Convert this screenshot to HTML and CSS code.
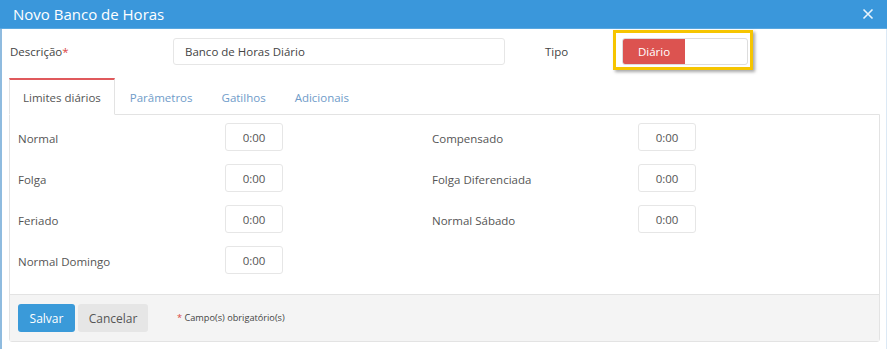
FILE: index.html
```html
<!DOCTYPE html>
<html lang="pt-BR">
<head>
<meta charset="utf-8">
<title>Novo Banco de Horas</title>
<link rel="stylesheet" href="styles.css">
</head>
<body>
<div class="modal">
  <div class="modal-header">
    <span class="modal-title">Novo Banco de Horas</span>
    <svg class="close" width="12" height="12" viewBox="0 0 12 12"><path d="M1.5 1.5L10.5 10.5M10.5 1.5L1.5 10.5" stroke="#eaf4fc" stroke-width="1.6" fill="none"/></svg>
  </div>
  <div class="modal-body">
    <div class="top-row">
      <label class="lbl-desc">Descrição<span class="req">*</span></label>
      <div class="input desc-input">Banco de Horas Diário</div>
      <label class="lbl-tipo">Tipo</label>
      <div class="toggle-wrap">
        <div class="toggle"><span class="toggle-on">Diário</span></div>
        <span class="highlight"></span>
      </div>
    </div>
    <div class="tabs">
      <div class="tab active">Limites diários</div>
      <div class="tab">Parâmetros</div>
      <div class="tab">Gatilhos</div>
      <div class="tab">Adicionais</div>
    </div>
    <div class="panel">
      <div class="grid">
        <span class="lbl">Normal</span><div class="time">0:00</div><span></span>
        <span class="lbl">Compensado</span><div class="time">0:00</div>
        <span class="lbl">Folga</span><div class="time">0:00</div><span></span>
        <span class="lbl">Folga Diferenciada</span><div class="time">0:00</div>
        <span class="lbl">Feriado</span><div class="time">0:00</div><span></span>
        <span class="lbl">Normal Sábado</span><div class="time">0:00</div>
        <span class="lbl">Normal Domingo</span><div class="time">0:00</div><span></span>
        <span></span><span></span>
      </div>
      <div class="footer">
        <button class="btn btn-primary">Salvar</button>
        <button class="btn btn-default">Cancelar</button>
        <span class="note"><span class="req">*</span> Campo(s) obrigatório(s)</span>
      </div>
    </div>
  </div>
</div>
</body>
</html>
```
FILE: styles.css
```css
* { box-sizing: border-box; }
html, body { margin: 0; padding: 0; background: #fff; }
body { font-family: "Open Sans", "Noto Sans", sans-serif; color: #555; width: 887px; height: 349px; overflow: hidden; }

.modal {
  height: 349px;
  border-left: 2px solid #8fbbdf;
  border-right: 1px solid #dce9f5;
}
.modal-header {
  height: 29px;
  margin-left: -2px;
  margin-right: -1px;
  background: #3a97db;
  border-bottom: 1px solid #5aa8e0;
  display: flex;
  align-items: center;
  justify-content: space-between;
  padding: 0 13px 0 13px;
}
.modal-title { color: #fff; font-size: 15px; line-height: 20px; }
.close { display: block; }

.modal-body { padding: 8px 5px 0 7px; }

.top-row { display: flex; align-items: center; height: 27px; margin-top: 1px; }
.lbl-desc { font-size: 11.5px; color: #444; width: 164px; padding-left: 1px; }
.req { color: #d9453f; }
.input {
  height: 27px;
  border: 1px solid #e6e6e6;
  border-radius: 3px;
  font-size: 11.5px;
  color: #444;
  display: flex;
  align-items: center;
}
.desc-input { width: 332px; padding-left: 11px; }
.lbl-tipo { font-size: 11.5px; color: #444; margin-left: 40px; width: 77px; }

.toggle-wrap { position: relative; }
.toggle {
  width: 126px;
  height: 27px;
  border: 1px solid #ddd;
  border-radius: 3px;
  background: #fff;
  display: flex;
}
.toggle-on {
  width: 62px;
  background: #dc5350;
  color: #fff;
  font-size: 11.5px;
  display: flex;
  align-items: center;
  justify-content: center;
  border-radius: 2px 0 0 2px;
}
.highlight {
  position: absolute;
  left: -9px; top: -8px; right: -5px; bottom: -5px;
  border: 3px solid #f6c500;
  box-shadow: 2px 2px 3px rgba(0,0,0,0.35);
  pointer-events: none;
}

.tabs { display: flex; margin-top: 13px; }
.tab {
  height: 37px;
  padding: 1px 13px 0 14px;
  font-size: 11.5px;
  color: #6f9cc9;
  display: flex;
  align-items: center;
  border: 1px solid transparent;
  border-top-width: 2px;
  margin-bottom: -1px;
  position: relative;
  z-index: 1;
}
.tab.active {
  color: #555;
  background: #fff;
  border-color: #e3e3e3;
  border-top-color: #e0595c;
  border-bottom-color: #fff;
  padding: 1px 13px 0 13px;
}

.panel {
  width: 871px;
  border: 1px solid #e3e3e3;
  border-radius: 0 0 3px 3px;
}
.grid {
  display: grid;
  grid-template-columns: 207px 58px 149px 206px 58px;
  grid-auto-rows: 28px;
  row-gap: 13px;
  align-items: center;
  padding: 8px 0 20px 8px;
}
.lbl { font-size: 11.5px; color: #555; padding-top: 2px; }
.time {
  height: 28px;
  border: 1px solid #e6e6e6;
  border-radius: 3px;
  font-size: 11.5px;
  color: #555;
  display: flex;
  align-items: center;
  justify-content: center;
}

.footer {
  background: #f4f4f4;
  border-top: 1px solid #e3e3e3;
  height: 47px;
  padding: 9px 0 0 8px;
  display: flex;
  align-items: flex-start;
}
.btn {
  height: 28px;
  border: none;
  border-radius: 3px;
  font-family: "Open Sans", "Noto Sans", sans-serif;
  font-size: 12px;
  padding: 0;
  cursor: pointer;
}
.btn-primary { width: 57px; background: #3a9ad9; color: #fff; }
.btn-default { width: 70px; background: #e6e6e6; color: #555; margin-left: 3px; }
.note { font-size: 9.2px; color: #444; margin-left: 29px; line-height: 28px; }
```
